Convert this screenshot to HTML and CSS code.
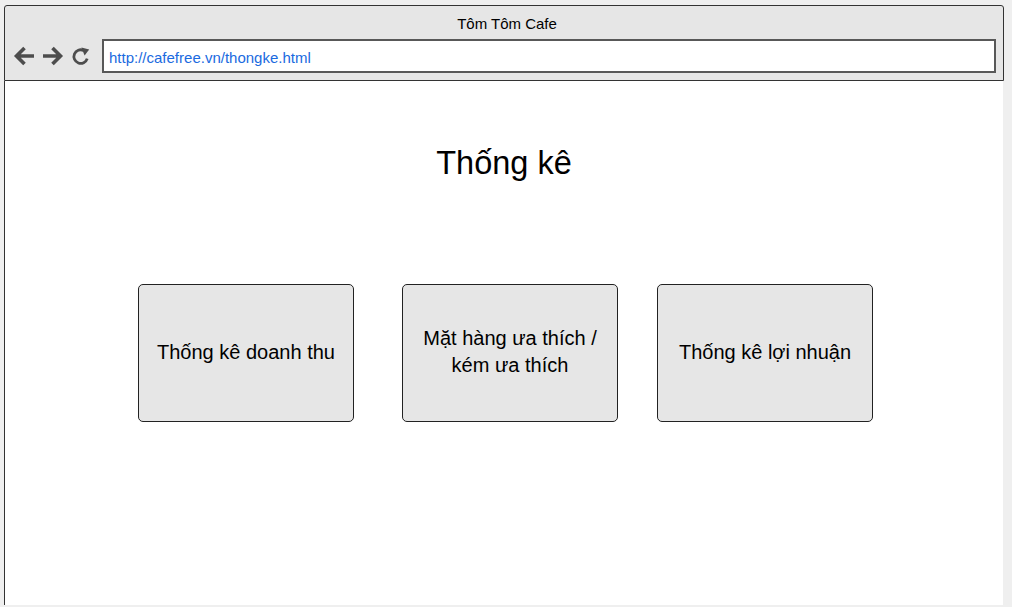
FILE: index.html
```html
<!DOCTYPE html>
<html lang="vi">
<head>
<meta charset="utf-8">
<title>Tôm Tôm Cafe</title>
<link rel="stylesheet" href="styles.css">
</head>
<body>
<div class="window">
  <div class="chrome">
    <div class="win-title">Tôm Tôm Cafe</div>
    <div class="nav-row">
      <div class="nav-icons">
        <svg class="nav-icon" width="22" height="22" viewBox="0 0 22 22"><path d="M21 11H4 M11.5 3 L3.5 11 L11.5 19" fill="none" stroke="#4d4d4d" stroke-width="3.6" stroke-linejoin="miter"/></svg>
        <svg class="nav-icon" width="22" height="22" viewBox="0 0 22 22"><path d="M1 11H18 M10.5 3 L18.5 11 L10.5 19" fill="none" stroke="#4d4d4d" stroke-width="3.6" stroke-linejoin="miter"/></svg>
        <svg class="nav-icon" width="20" height="20" viewBox="0 0 20 20"><path d="M16.2 12.6 A6.8 6.8 0 1 1 12.6 4.4" fill="none" stroke="#4d4d4d" stroke-width="2.8"/><path d="M10.4 1.6 L18.2 3.4 L13.6 9.6 Z" fill="#4d4d4d"/></svg>
      </div>
      <div class="address">http://cafefree.vn/thongke.html</div>
    </div>
  </div>
  <div class="page">
    <h1 class="heading">Thống kê</h1>
    <div class="cards">
      <div class="card card-first">Thống kê doanh thu</div>
      <div class="card">Mặt hàng ưa thích / kém ưa thích</div>
      <div class="card">Thống kê lợi nhuận</div>
    </div>
  </div>
</div>
</body>
</html>
```
FILE: styles.css
```css
html, body {
  margin: 0;
  padding: 0;
}
body {
  width: 1012px;
  height: 607px;
  overflow: hidden;
  background: #efefef;
  font-family: "Liberation Sans", Arial, sans-serif;
  color: #000;
}
.window {
  margin: 5px 0 0 4px;
  width: 1000px;
  height: 600px;
  display: flex;
  flex-direction: column;
}
.chrome {
  box-sizing: border-box;
  height: 76px;
  background: #e6e6e6;
  border: 1px solid #333;
  border-radius: 3px 3px 0 0;
  display: flex;
  flex-direction: column;
}
.win-title {
  text-align: center;
  font-size: 15px;
  line-height: 18px;
  padding-top: 9px;
  margin-bottom: 6px;
  padding-left: 6px;
}
.nav-row {
  display: flex;
  align-items: center;
  padding: 0 7px 0 8px;
}
.nav-icons {
  display: flex;
  align-items: center;
  gap: 7px;
  width: 89px;
  flex: none;
}
.nav-icon {
  display: block;
}
.address {
  box-sizing: border-box;
  flex: 1;
  height: 34px;
  background: #fff;
  border: 2px solid #585858;
  padding-left: 5px;
  font-size: 15px;
  line-height: 33px;
  color: #1a6ae0;
}
.page {
  flex: 1;
  background: #fff;
  border-left: 1px solid #333;
  margin-right: 1px;
  display: flex;
  flex-direction: column;
}
.heading {
  margin: 64px 0 0 0;
  font-weight: normal;
  font-size: 32.5px;
  line-height: 37px;
  text-align: center;
}
.cards {
  display: flex;
  gap: 39px;
  margin-top: 102px;
  padding-left: 133px;
}
.card {
  box-sizing: border-box;
  width: 216px;
  height: 138px;
  background: #e6e6e6;
  border: 1px solid #222;
  border-radius: 5px;
  display: flex;
  align-items: center;
  justify-content: center;
  text-align: center;
  padding: 0 16px 2px;
  font-size: 20px;
  line-height: 27px;
}
.card-first {
  margin-right: 9px;
}
```
